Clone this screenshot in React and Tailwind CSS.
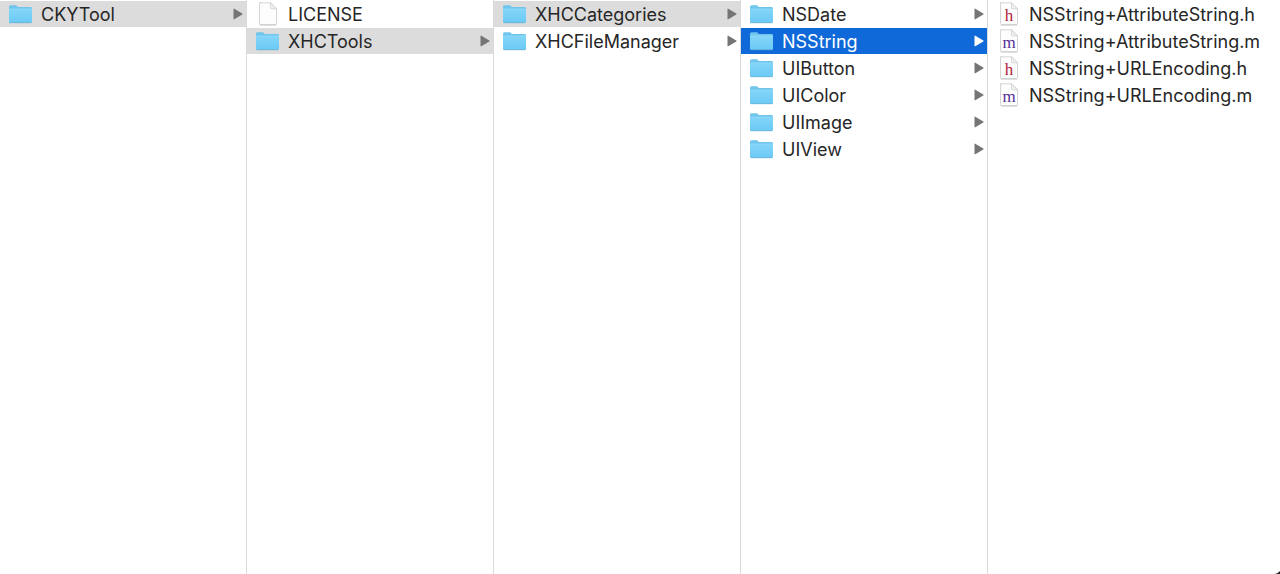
import React, { useState } from "react";
import clsx from "clsx";

const columns = [
  { name: "Root", items: [{ name: "CKYTool", type: "folder" }], open: "CKYTool" },
  {
    name: "CKYTool",
    items: [
      { name: "LICENSE", type: "file" },
      { name: "XHCTools", type: "folder" },
    ],
    open: "XHCTools",
  },
  {
    name: "XHCTools",
    items: [
      { name: "XHCCategories", type: "folder" },
      { name: "XHCFileManager", type: "folder" },
    ],
    open: "XHCCategories",
  },
  {
    name: "XHCCategories",
    items: ["NSDate", "NSString", "UIButton", "UIColor", "UIImage", "UIView"].map((name) => ({ name, type: "folder" })),
    open: "NSString",
  },
  {
    name: "NSString",
    items: [
      { name: "NSString+AttributeString.h", type: "h" },
      { name: "NSString+AttributeString.m", type: "m" },
      { name: "NSString+URLEncoding.h", type: "h" },
      { name: "NSString+URLEncoding.m", type: "m" },
    ],
  },
];

function FolderIcon() {
  return (
    <svg viewBox="0 0 25 20" className="w-[25px] h-5 shrink-0" aria-hidden="true">
      <defs>
        <linearGradient id="folder" x1="0" y1="0" x2="0" y2="1">
          <stop offset="0" stopColor="#84d5f9" />
          <stop offset="1" stopColor="#6bcaf5" />
        </linearGradient>
      </defs>
      <path d="M1 3Q1 1.2 2.5 1.2H7.5Q8.5 1.2 9 2L9.8 3H22.5Q24 3 24 4.3V17.5Q24 18.8 22.7 18.8H2.3Q1 18.8 1 17.5Z" fill="#6fc5ec" />
      <path d="M1 5H24V17.2Q24 18.4 22.8 18.4H2.2Q1 18.4 1 17.2Z" fill="url(#folder)" />
      <path d="M1.2 5H23.8" stroke="#92dbfa" strokeWidth="0.8" />
      <path d="M1.5 18.7H23.5" stroke="#62afd4" strokeWidth="0.8" />
    </svg>
  );
}

function FileIcon({ letter }) {
  return (
    <svg viewBox="0 0 20 24" className="w-5 h-6 shrink-0" aria-hidden="true">
      <path d="M1.5 0.8H12.5L18.5 6.8V21.8Q18.5 22.8 17.5 22.8H2.5Q1.5 22.8 1.5 21.8V1.8Q1.5 0.8 2.5 0.8Z" fill="#fdfdfd" stroke="#d0d0d0" strokeWidth="0.9" />
      <path d="M12.5 0.8V5.8Q12.5 6.8 13.5 6.8H18.5Z" fill="#f1f1f1" stroke="#cfcfcf" strokeWidth="0.8" />
      <path d="M2 23H18" stroke="#b9b9b9" strokeWidth="0.7" />
      {letter && (
        <text
          x="10"
          y="19"
          textAnchor="middle"
          fontSize="17"
          fontFamily="Liberation Serif, serif"
          fill={letter === "h" ? "#b3203a" : "#56309a"}
        >
          {letter}
        </text>
      )}
    </svg>
  );
}

function Row({ item, selected, active, onSelect }) {
  const isFolder = item.type === "folder";
  return (
    <li>
      <button
        type="button"
        onClick={onSelect}
        aria-pressed={selected}
        className={clsx(
          "flex w-full h-[26px] items-center gap-2 pl-2 pr-[3px] text-left",
          selected && active && "bg-[#1069d8] text-white",
          selected && !active && "bg-[#dcdcdc]"
        )}
      >
        <span className="flex w-[25px] shrink-0 justify-center">
          {isFolder ? <FolderIcon /> : <FileIcon letter={item.type === "file" ? null : item.type} />}
        </span>
        <span className="flex-1 truncate pt-0.5">{item.name}</span>
        {isFolder && (
          <svg viewBox="0 0 10 12" className={clsx("w-[10px] h-3 shrink-0", selected && active ? "text-white" : "text-[#757575]")} aria-hidden="true">
            <path d="M0.5 1.2Q0.5 0.3 1.3 0.8L9.3 5.4Q10 6 9.3 6.5L1.3 11.2Q0.5 11.6 0.5 10.8Z" fill="currentColor" />
          </svg>
        )}
      </button>
    </li>
  );
}

export default function App() {
  const [selection, setSelection] = useState(columns.map((c) => c.open));

  const select = (index, name) => setSelection((prev) => prev.map((s, i) => (i === index ? name : s)));

  return (
    <main className="relative grid min-h-screen grid-cols-[247fr_247fr_247fr_247fr_292fr] overflow-hidden bg-white text-lg leading-[26px] text-[#262626] font-['Inter','Liberation_Sans',sans-serif]">
      {columns.map((column, index) => (
        <ul
          key={column.name}
          aria-label={column.name}
          className={clsx("flex min-w-0 flex-col gap-px pt-px", index < columns.length - 1 && "border-r border-[#dadada]")}
        >
          {column.items.map((item) => (
            <Row
              key={item.name}
              item={item}
              selected={selection[index] === item.name}
              active={index === 3}
              onSelect={() => select(index, item.name)}
            />
          ))}
        </ul>
      ))}
      <svg viewBox="0 0 5 3" className="absolute bottom-0 right-0 w-[5px] h-[3px]" aria-hidden="true">
        <path d="M5 0V3H0Q3 2.5 5 0Z" fill="#222" />
      </svg>
    </main>
  );
}
